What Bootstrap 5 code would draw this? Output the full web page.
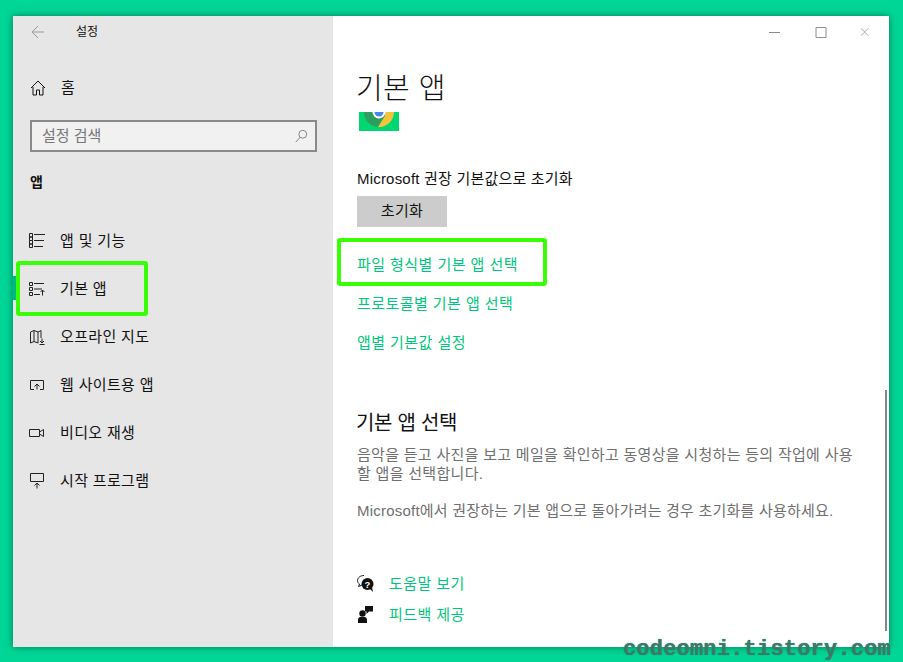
<!DOCTYPE html>
<html lang="ko">
<head>
    <meta charset="UTF-8">
    <meta name="viewport" content="width=device-width, initial-scale=1.0">
    <title>설정</title>
    <link href="https://cdn.jsdelivr.net/npm/bootstrap@5.3.0/dist/css/bootstrap.min.css" rel="stylesheet">
    <style>
        html, body { height: 100%; }
        body {
            background: #00d696;
            font-family: "Liberation Sans", "Noto Sans CJK KR", sans-serif;
            font-size: 15px;
            color: #111;
            overflow: hidden;
        }
        .stage { position: relative; width: 903px; height: 662px; padding: 16px 14px 15px 13px; }
        .win { height: 631px; background: #fff; box-shadow: 0 0 7px rgba(0, 70, 50, .65); position: relative; }
        .side { width: 320px; background: #e6e6e6; flex: none; }
        .side-top { height: 32px; padding-left: 17px; }
        .side-top .ttl { margin-left: 30px; font-size: 12px; }
        .home-row { margin-top: 24px; height: 32px; padding-left: 17px; }
        .home-row span { margin-left: 15px; font-size: 15px; }
        .search-box {
            margin: 16px 16px 0 17px; height: 32px; border: 2px solid #8a8a8a; background: #f1f1f1;
            padding: 0 7px 0 10px; color: #777; font-size: 15px;
        }
        .group-ttl { margin: 20px 0 0 17px; height: 20px; line-height: 20px; font-weight: 700; font-size: 14px; }
        .side-list { margin-top: 25px; }
        .side-item { height: 48px; padding-left: 16px; gap: 15px; font-size: 15px; letter-spacing: .35px; position: relative; }
        .side-item.on::before { content: ""; position: absolute; left: 0; top: 11px; width: 3px; height: 24px; background: #00b981; }
        .ic { width: 16px; height: 16px; flex: none; fill: none; stroke: #222; stroke-width: 1; }
        .main-pane { flex: 1; padding-left: 23px; }
        .caption { height: 32px; padding-right: 11px; }
        .caption svg { width: 46px; height: 12px; fill: none; stroke: #8c8c8c; stroke-width: 1; }
        .page-ttl { margin: 18px 0 0; font-size: 29px; line-height: 40px; font-weight: 300; color: #111; letter-spacing: .4px; font-family: "Noto Sans CJK KR", sans-serif; }
        .chrome-cut { display: block; margin: 6px 0 0 3px; width: 40px; height: 19px; }
        .reset-lbl { margin: 38px 0 0 1px; font-size: 15px; line-height: 20px; letter-spacing: .2px; }
        .reset-btn {
            margin: 7px 0 0 1px; width: 90px; height: 31px; background: #ccc; border: 0; border-radius: 0;
            color: #111; font-size: 15px; padding: 0; display: block; letter-spacing: .3px;
        }
        .lnk-list { margin: 28px 0 0 1px; }
        .lnk-list a, .help-row a { color: #00c77d; text-decoration: none; font-size: 15px; letter-spacing: .45px; line-height: 20px; }
        .lnk-list a { display: block; margin-bottom: 19px; }
        .sec-ttl { margin: 55px 0 0; font-size: 20px; line-height: 28px; font-weight: 400; color: #111; letter-spacing: -.3px; font-family: "Noto Sans CJK KR", sans-serif; }
        .desc { margin: 9px 0 0 1px; width: 502px; color: #6f6f6f; font-size: 15px; line-height: 19px; letter-spacing: .3px; }
        .desc + .desc { margin-top: 18px; letter-spacing: .22px; }
        .help-list { margin: 48px 0 0 1px; }
        .help-row { height: 31px; gap: 15px; }
        .help-row svg { width: 17px; height: 17px; flex: none; }
        .mark-box { position: absolute; border: 4px solid #39ff06; border-radius: 3px; }
        .scroll-thumb { position: absolute; left: 885px; top: 390px; width: 2px; height: 241px; background: #858585; }
        .wm {
            position: absolute; right: 12px; bottom: 1px; font-family: "Liberation Mono", monospace; font-weight: 700;
            font-size: 22px; line-height: 22px; letter-spacing: .2px; color: #3a7a68; text-shadow: 0 0 1px #3a7a68;
        }
    </style>
</head>
<body>
    <div class="stage">
        <div class="win d-flex">
            <div class="side">
                <div class="side-top d-flex align-items-center">
                    <svg class="ic" viewBox="0 0 16 16" style="stroke:#999"><path d="M14 8H2M8 2 2 8l6 6"/></svg>
                    <span class="ttl">설정</span>
                </div>
                <div class="home-row d-flex align-items-center">
                    <svg class="ic" viewBox="0 0 16 16" style="stroke:#111"><path d="M1 8 8 1l7 7M3 7v8h3.500v-5h3v5H13V7"/></svg>
                    <span>홈</span>
                </div>
                <div class="search-box d-flex align-items-center justify-content-between">
                    <span>설정 검색</span>
                    <svg class="ic" viewBox="0 0 16 16" style="stroke:#777;width:14px;height:14px"><circle cx="10" cy="6" r="4.500"/><path d="M7 9.500 2 15"/></svg>
                </div>
                <div class="group-ttl">앱</div>
                <div class="side-list">
                    <div class="side-item d-flex align-items-center">
                        <svg class="ic" viewBox="0 0 16 16"><path d="M.5.5h3v3.500h-3zM.5 4h3v3.500h-3zM.5 7.500h3V11h-3zM.5 11h3v3.500h-3zM5 1.500h11M5 7.500h10M5 13.500h9"/></svg>
                        <span>앱 및 기능</span>
                    </div>
                    <div class="side-item on d-flex align-items-center">
                        <svg class="ic" viewBox="0 0 16 16"><path d="M.5 1.500h3v3h-3zM.5 6.500h3v3h-3zM.5 11.500h3v3h-3zM5 2.500h10M5 8h8M5 13.500h6M13.500 14.500V9M11.500 11l2-2 2 2"/></svg>
                        <span>기본 앱</span>
                    </div>
                    <div class="side-item d-flex align-items-center">
                        <svg class="ic" viewBox="0 0 16 16"><path d="M1.500 3 5 1.500 9 3l3-1.500V9M1.500 3v11L5 12.500l4 1.500M5 1.500v11M9 3v11M13 9.500v4M11 12l2 2 2-2M10.500 15.500h5"/></svg>
                        <span>오프라인 지도</span>
                    </div>
                    <div class="side-item d-flex align-items-center">
                        <svg class="ic" viewBox="0 0 16 16"><path d="M5 12.500H1.500v-9h13v9H11M8 12.500V7M5.500 9.500 8 7l2.500 2.500"/></svg>
                        <span>웹 사이트용 앱</span>
                    </div>
                    <div class="side-item d-flex align-items-center">
                        <svg class="ic" viewBox="0 0 16 16"><path d="M.5 4.500h10v7H.5zM10.500 7l4-2.500v7l-4-2.500"/></svg>
                        <span>비디오 재생</span>
                    </div>
                    <div class="side-item d-flex align-items-center">
                        <svg class="ic" viewBox="0 0 16 16"><path d="M1.500.5h13v8h-13zM8 15.500V10M5.500 12.500 8 10l2.500 2.500"/></svg>
                        <span>시작 프로그램</span>
                    </div>
                </div>
            </div>
            <div class="main-pane">
                <div class="caption d-flex justify-content-end align-items-center">
                    <svg viewBox="0 0 46 12"><path d="M17 6.500h11"/></svg>
                    <svg viewBox="0 0 46 12"><path d="M18 1.500h10v10H18z"/></svg>
                    <svg viewBox="0 0 46 12" style="width:34px" preserveAspectRatio="xMaxYMid"><path d="M23 1l10 10M33 1 23 11"/></svg>
                </div>
                <h1 class="page-ttl">기본 앱</h1>
                <svg class="chrome-cut" viewBox="0 0 40 19">
                    <rect width="40" height="19" fill="#00d672"/>
                    <path d="M5 0a15 15 0 0 0 14 15l7-11-6-4z" fill="#2e9e5f"/>
                    <path d="M35 0a15 15 0 0 1-16 15l7-11V0z" fill="#f5c33b"/>
                    <circle cx="20" cy="0" r="6.500" fill="#fff"/>
                    <circle cx="20" cy="0" r="4.500" fill="#4a86e8"/>
                </svg>
                <div class="reset-lbl">Microsoft 권장 기본값으로 초기화</div>
                <button type="button" class="btn reset-btn">초기화</button>
                <div class="lnk-list">
                    <a href="#">파일 형식별 기본 앱 선택</a>
                    <a href="#">프로토콜별 기본 앱 선택</a>
                    <a href="#">앱별 기본값 설정</a>
                </div>
                <h2 class="sec-ttl">기본 앱 선택</h2>
                <p class="desc">음악을 듣고 사진을 보고 메일을 확인하고 동영상을 시청하는 등의 작업에 사용할 앱을 선택합니다.</p>
                <p class="desc">Microsoft에서 권장하는 기본 앱으로 돌아가려는 경우 초기화를 사용하세요.</p>
                <div class="help-list">
                    <div class="help-row d-flex align-items-center">
                        <svg viewBox="0 0 17 17"><path d="M7 .5C3.300.5.500 2.800.500 5.500c0 1.500.8 2.700 2 3.500L1.500 11.500 5 10" fill="#fff" stroke="#111"/><circle cx="10.500" cy="9" r="6" fill="#111"/><path d="M13 14l3 3-1-5z" fill="#111"/><text x="10.500" y="12.500" text-anchor="middle" font-size="9.500" font-weight="700" fill="#fff" font-family="Liberation Sans">?</text></svg>
                        <a href="#">도움말 보기</a>
                    </div>
                    <div class="help-row d-flex align-items-center">
                        <svg viewBox="0 0 17 17" fill="#111"><circle cx="5.500" cy="7.500" r="3.200"/><path d="M1 17v-3c0-2 1-3 2.500-3h4c1.500 0 2.500 1 2.500 3v3zM8 0h8v5.500h-4L9.500 8V5.500H8z"/></svg>
                        <a href="#">피드백 제공</a>
                    </div>
                </div>
            </div>
        </div>
        <div class="mark-box" style="left:16px;top:261px;width:132px;height:55px"></div>
        <div class="mark-box" style="left:337px;top:238px;width:210px;height:48px"></div>
        <div class="scroll-thumb"></div>
        <div class="wm">codeomni.tistory.com</div>
    </div>
    <script src="https://cdn.jsdelivr.net/npm/bootstrap@5.3.0/dist/js/bootstrap.bundle.min.js"></script>
</body>
</html>
